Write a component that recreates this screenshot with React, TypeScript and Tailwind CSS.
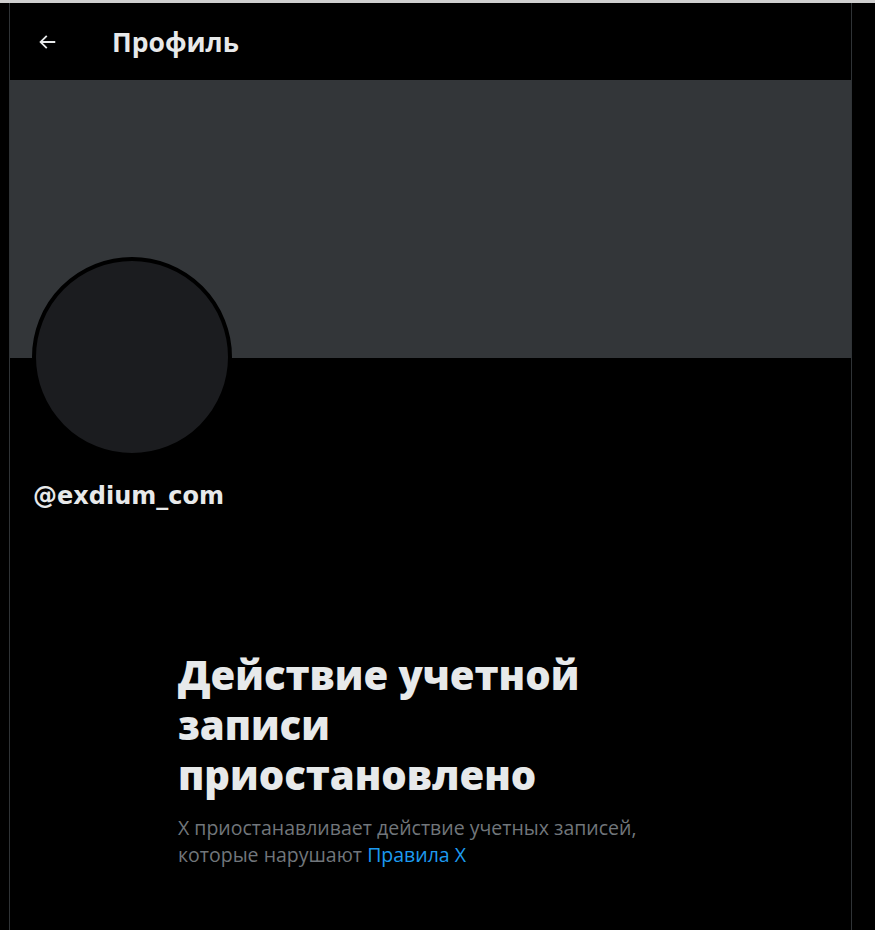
import React from "react";

export default function App() {
  return (
    <div
      className="w-[875px] h-[930px] bg-black flex flex-col overflow-hidden"
      style={{ fontFamily: '"Open Sans", "Noto Sans", sans-serif' }}
    >
      <div className="h-[3px] bg-[#cfcfcf] shrink-0" />
      <div className="flex flex-1">
        <div className="w-[9px] shrink-0" />
        <div className="w-[843px] border-x border-[#2f3336] flex flex-col">
          <div className="h-[77px] flex items-center shrink-0">
            <svg
              viewBox="0 0 24 24"
              className="w-[22px] h-[22px] ml-[26px] text-[#e7e9ea]"
              fill="currentColor"
            >
              <path d="M7.414 13l5.043 5.04-1.414 1.42L3.586 12l7.457-7.46 1.414 1.42L7.414 11H21v2H7.414z" />
            </svg>
            <div className="ml-[54px] mt-[2px] text-[26.5px] font-bold text-[#e7e9ea] leading-none">
              Профиль
            </div>
          </div>
          <div className="h-[278px] bg-[#333639] shrink-0" />
          <div className="ml-[22px] mt-[-101px] w-[200px] h-[200px] rounded-full border-[4px] border-black bg-[#1b1c1f] shrink-0" />
          <div
            className="ml-[23px] mt-[25px] text-[24px] font-bold text-[#e7e9ea] leading-[28px]"
            style={{ fontFamily: '"DejaVu Sans", sans-serif' }}
          >
            @exdium_com
          </div>
          <div className="ml-[168px] mt-[140px] w-[460px]">
            <div className="text-[40px] font-extrabold text-[#e7e9ea] leading-[50px]">
              Действие учетной записи приостановлено
            </div>
            <div className="mt-[14px] text-[19.5px] text-[#71767b] leading-[27px]">
              X приостанавливает действие учетных записей, которые нарушают{" "}
              <span className="text-[#1d9bf0]">Правила X</span>
            </div>
          </div>
        </div>
      </div>
    </div>
  );
}
